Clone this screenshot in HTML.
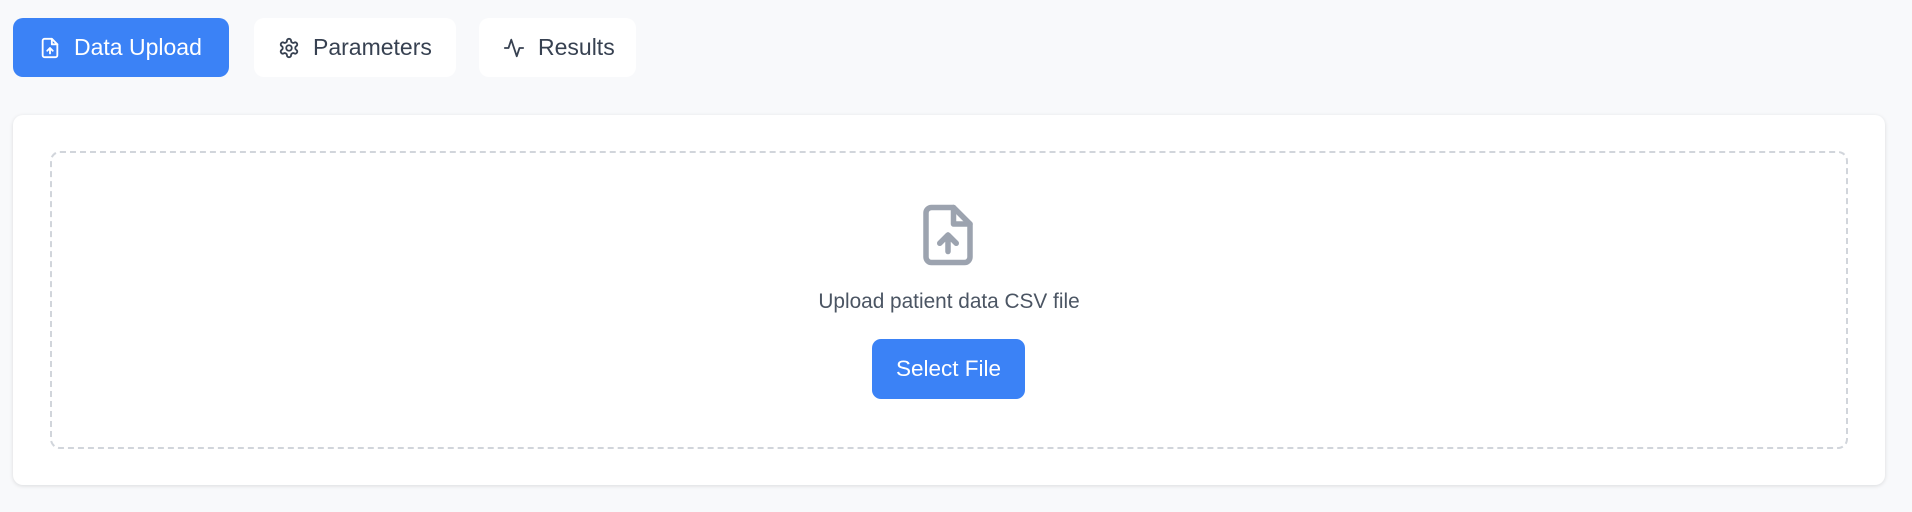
<!DOCTYPE html>
<html><head><style>
body{margin:0;width:1912px;height:512px;background:#f8f9fb;font-family:"Liberation Sans",sans-serif;position:relative;overflow:hidden}
.tab{position:absolute;top:18px;height:59px;border-radius:10px;background:#fff;color:#374151;font-size:23px;display:flex;align-items:center;box-sizing:border-box;padding-left:24px}
.tab svg{margin-right:13px}
.card{position:absolute;left:13px;top:115px;width:1872px;height:370px;background:#fff;border-radius:10px;box-shadow:0 1px 4px rgba(0,0,0,.12)}
.dash{position:absolute;left:37px;top:36px;width:1798px;height:298px;border:2.5px dashed #d1d5db;border-radius:10px;box-sizing:border-box}
.txt{position:absolute;left:13px;width:1872px;top:290px;text-align:center;font-size:20.8px;color:#4b5563}
.btn{position:absolute;left:872px;top:339px;width:153px;height:60px;background:#3b82f6;border-radius:9px;color:#fff;font-size:22.5px;display:flex;align-items:center;justify-content:center}
</style></head><body>
<div class="tab" style="left:13px;width:216px;background:#3b82f6;color:#fff;padding-left:26px">
<svg width="22" height="24" viewBox="0 0 24 24" fill="none" stroke="#fff" stroke-width="2" stroke-linecap="round" stroke-linejoin="round"><path d="M14 2H6a2 2 0 0 0-2 2v16a2 2 0 0 0 2 2h12a2 2 0 0 0 2-2V8z"/><path d="M14 2v6h6"/><path d="M12 18v-6M9 15l3-3 3 3"/></svg>Data Upload</div>
<div class="tab" style="left:254px;width:202px">
<svg width="22" height="22" viewBox="0 0 24 24" fill="none" stroke="#374151" stroke-width="2" stroke-linecap="round" stroke-linejoin="round"><path d="M12.22 2h-.44a2 2 0 0 0-2 2v.18a2 2 0 0 1-1 1.73l-.43.25a2 2 0 0 1-2 0l-.15-.08a2 2 0 0 0-2.73.73l-.22.38a2 2 0 0 0 .73 2.73l.15.1a2 2 0 0 1 1 1.72v.51a2 2 0 0 1-1 1.74l-.15.09a2 2 0 0 0-.73 2.73l.22.38a2 2 0 0 0 2.73.73l.15-.08a2 2 0 0 1 2 0l.43.25a2 2 0 0 1 1 1.73V20a2 2 0 0 0 2 2h.44a2 2 0 0 0 2-2v-.18a2 2 0 0 1 1-1.73l.43-.25a2 2 0 0 1 2 0l.15.08a2 2 0 0 0 2.73-.73l.22-.39a2 2 0 0 0-.73-2.73l-.15-.08a2 2 0 0 1-1-1.74v-.5a2 2 0 0 1 1-1.74l.15-.09a2 2 0 0 0 .73-2.73l-.22-.38a2 2 0 0 0-2.73-.73l-.15.08a2 2 0 0 1-2 0l-.43-.25a2 2 0 0 1-1-1.73V4a2 2 0 0 0-2-2z"/><circle cx="12" cy="12" r="3"/></svg>Parameters</div>
<div class="tab" style="left:479px;width:157px">
<svg width="22" height="22" viewBox="0 0 24 24" fill="none" stroke="#374151" stroke-width="2" stroke-linecap="round" stroke-linejoin="round"><path d="M22 12h-4l-3 9L9 3l-3 9H2"/></svg>Results</div>
<div class="card"><div class="dash"></div>
<svg style="position:absolute;left:902px;top:85px" width="66" height="70" viewBox="0 0 24 24" fill="none" stroke="#9ca3af" stroke-width="2" stroke-linecap="round" stroke-linejoin="round"><path d="M14 2H6a2 2 0 0 0-2 2v16a2 2 0 0 0 2 2h12a2 2 0 0 0 2-2V8z"/><path d="M14 2v6h6"/><path d="M12 18v-6M9 15l3-3 3 3"/></svg>
</div>
<div class="txt">Upload patient data CSV file</div>
<div class="btn">Select File</div>
</body></html>
